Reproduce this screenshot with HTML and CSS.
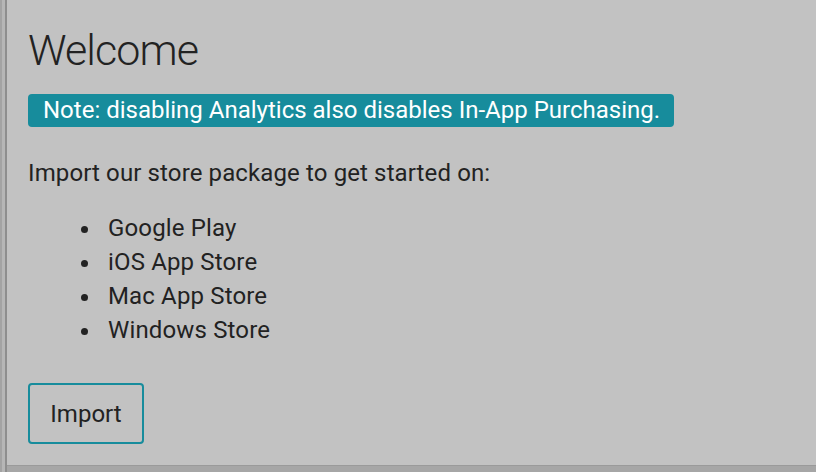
FILE: index.html
```html
<!DOCTYPE html>
<html>
<head>
<meta charset="utf-8">
<link rel="stylesheet" href="styles.css">
</head>
<body>
<div class="frame">
  <div class="edge"><div class="e1"></div><div class="e2"></div><div class="e3"></div></div>
  <div class="main">
    <div class="content">
      <h1 class="title">Welcome</h1>
      <div class="note">Note: disabling Analytics also disables In-App Purchasing.</div>
      <p class="intro">Import our store package to get started on:</p>
      <ul class="stores">
        <li>Google Play</li>
        <li>iOS App Store</li>
        <li>Mac App Store</li>
        <li>Windows Store</li>
      </ul>
      <button class="import">Import</button>
    </div>
    <div class="bottom"></div>
  </div>
</div>
</body>
</html>
```
FILE: styles.css
```css
html, body { margin: 0; padding: 0; }
body {
  width: 816px; height: 472px; overflow: hidden;
  background: #c2c2c2;
  font-family: Roboto, "Liberation Sans", sans-serif;
  color: #222;
}
.frame { display: flex; height: 472px; }
.edge { display: flex; width: 7px; flex: none; }
.e1 { width: 2px; background: #a3a3a3; }
.e2 { width: 3px; background: #b6b6b6; }
.e3 { width: 2px; background: #8e8e8e; }
.main { flex: 1; display: flex; flex-direction: column; }
.content { flex: 1; padding: 22px 0 0 21px; }
.bottom { height: 6px; background: #a6a6a6; border-top: 1px solid #9a9a9a; }
.title {
  margin: 0; font-weight: 300; font-size: 43px; line-height: 56px; color: #222;
  letter-spacing: -0.9px;
}
.note {
  display: inline-block; margin-top: 16px;
  background: #178c9c; color: #fff; border-radius: 4px;
  font-size: 24px; line-height: 33px; padding: 0 14px 0 15px;
}
.intro { margin: 30px 0 0; font-size: 24px; line-height: 32px; letter-spacing: 0.12px; }
.stores {
  margin: 22px 0 0; padding-left: 53px; list-style: none;
  font-size: 24px; line-height: 34px; letter-spacing: 0.15px;
}
.stores li { display: flex; align-items: center; gap: 20px; }
.stores li::before {
  content: ""; width: 7px; height: 7px; border-radius: 50%; background: #222;
  flex: none; margin-top: 2px;
}
.import {
  margin-top: 36px; display: block;
  width: 116px; height: 61px;
  background: transparent; border: 2px solid #178c9c; border-radius: 4px;
  font-family: Roboto, "Liberation Sans", sans-serif; font-size: 24px; color: #222;
}
```
